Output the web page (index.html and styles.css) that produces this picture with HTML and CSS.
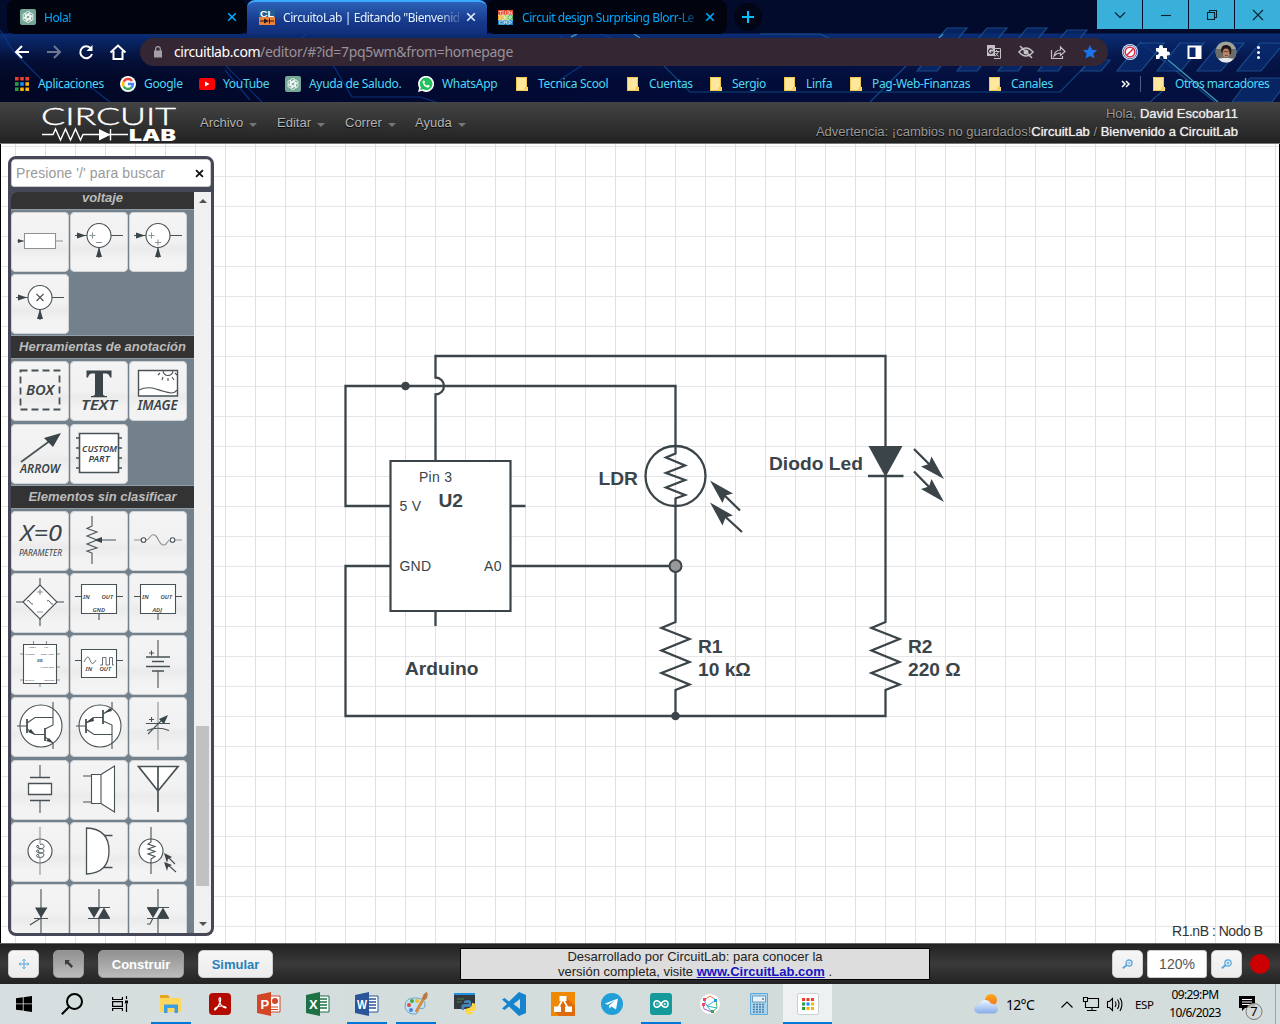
FILE: index.html
```html
<!DOCTYPE html>
<html lang="es">
<head>
<meta charset="utf-8">
<title>CircuitoLab | Editando "Bienvenido a CircuitLab"</title>
<link rel="stylesheet" href="styles.css">
</head>
<body>
<svg class="defs" width="0" height="0">
  <defs>
    <symbol id="gpt" viewBox="0 0 16 16"><rect width="16" height="16" rx="2" fill="#74a796"/><g fill="none" stroke="#fff" stroke-width=".8"><path id="petal" d="M5.6 9.3V4.8A2.4 2.4 0 0 1 10 3.6L6.5 5.8V8.5"/><use href="#petal" transform="rotate(60 8 8)"/><use href="#petal" transform="rotate(120 8 8)"/><use href="#petal" transform="rotate(180 8 8)"/><use href="#petal" transform="rotate(240 8 8)"/><use href="#petal" transform="rotate(300 8 8)"/></g></symbol>
    <symbol id="folder" viewBox="0 0 12 14"><path d="M0 0H11V10H12V14H0Z" fill="#ffe38c"/><path d="M.5 .5H10.5V9L9 11V13.5H.5Z" fill="#ffe79d" stroke="#f1c84e"/><path d="M9 13.5V11L10.5 9.5L11.5 11V13.5Z" fill="#f7cf57"/></symbol>
    <symbol id="close" viewBox="0 0 10 10"><path d="M1.2 1.2L8.8 8.8M8.8 1.2L1.2 8.8" fill="none" stroke="currentColor" stroke-width="1.6"/></symbol>
    <symbol id="grid9" viewBox="0 0 14 14"><path d="M0 0h3.6v3.6H0zM5.2 0h3.6v3.6H5.2zM10.4 0H14v3.6h-3.6z" fill="#e8402f"/><path d="M0 5.2h3.6v3.6H0z" fill="#2a9b4a"/><path d="M5.2 5.2h3.6v3.6H5.2z" fill="#1a8cff"/><path d="M10.4 5.2H14v3.6h-3.6zM5.2 10.4h3.6V14H5.2zM10.4 10.4H14V14h-3.6z" fill="#fbb40b"/><path d="M0 10.4h3.6V14H0z" fill="#2a9b4a"/></symbol>
    <linearGradient id="cloud" x2="0" y2="1"><stop stop-color="#edf4ff"/><stop offset="1" stop-color="#84ace8"/></linearGradient>
    <linearGradient id="sun" x2="0" y2="1"><stop stop-color="#ffab1b"/><stop offset="1" stop-color="#f0701a"/></linearGradient>
  </defs>
</svg>

<header class="browser">
  <svg class="theme" width="1280" height="102" viewBox="0 0 1280 102">
    <g fill="none" stroke="#0b3f94" stroke-width="1.2" opacity=".75">
      <path d="M0 30L14 52L50 88H92L110 102M200 40L262 102M225 70L250 100M330 60L352 97H420L436 102M372 0L410 32H430M480 0L500 22M560 36L590 60L560 80M600 34L640 48M290 50L330 10"/>
      <path d="M664 66L690 92H1060L1095 56" stroke="#0d5591"/>
      <path d="M870 102L928 44H1010M760 34L820 34L850 48M1040 102H1150L1166 88M1140 42L1215 102" stroke="#1a5a9e"/>
    </g>
    <g fill="#082b70" stroke="#225a9c" stroke-width="1.2" opacity=".75">
      <path d="M947 28h20l-10 12h-20zM987 28h20l-10 12h-20zM1027 28h20l-10 12h-20zM1067 30h20l-10 12h-20zM926 60h20l-9 11h-20zM966 60h20l-9 11h-20zM1007 60h20l-9 11h-20zM1047 60h20l-9 11h-20zM1090 60h20l-9 11h-20z"/>
      <path d="M1140 43h24l-23 28h-24zM1180 43h24l-23 28h-24zM1220 43h24l-23 28h-24zM1260 43h24l-23 28h-24zM1250 78h40l-18 24h-40z"/>
    </g>
    <path d="M937 40L943 34M571 37L577 34M640 38L634 34M1168 60L1218 102" stroke="#3b8fae" stroke-width="1.5"/>
  </svg>

  <div class="tabs">
    <div class="tab tab-first">
      <svg width="16" height="16"><use href="#gpt"/></svg>
      <span class="tab-title">Hola!</span>
      <svg class="x" width="10" height="10"><use href="#close"/></svg>
    </div>
    <div class="tab active">
      <svg width="16" height="16" viewBox="0 0 16 16"><rect width="16" height="8" fill="#1f5f96"/><rect y="8" width="16" height="8" fill="#ec8137"/><text x="1" y="7.5" class="cl" textLength="14" lengthAdjust="spacingAndGlyphs">CL</text><path d="M1 12H5M10 12H15M10.5 9.5V14.5" stroke="#241b18"/><path d="M5 9.5V14.5L10 12Z" fill="#241b18"/></svg>
      <span class="tab-title">CircuitoLab | Editando "Bienvenid</span>
      <svg class="x" width="10" height="10"><use href="#close"/></svg>
    </div>
    <div class="tab tab-third">
      <svg width="15" height="15" viewBox="0 0 15 15"><path fill="#e44b33" d="M0 0h15v5H0z"/><path fill="#f4a51f" d="M0 5h5v5H0z"/><path fill="#a4c739" d="M5 5h5v5H5z"/><path fill="#3fae4b" d="M10 5h5v5h-5z"/><path fill="#1f7fbf" d="M0 10h15v5H0z"/><path stroke="#fff" fill="none" stroke-width=".6" d="M1.2 1.5h2.6M2.5 1.5v2.5M7.5 1.2v2.8M11.4 4v-2.5l2.2 2.5v-2.5M1.5 6.2v2.8M3.8 6.2L2 7.5L3.8 9M8.8 6.2H6.5v2.6H8.8M6.5 7.5H8.5M11.5 9V6.3h2v1.3h-2L13.6 9M3.8 11.3H1.5v2.5h2.3M6.5 14v-2.7h2v2.7M6.5 12.7h2M11.5 11.3v2.5l2-.8v-1zM5 0v15M10 0v15M0 5h15M0 10h15"/></svg>
      <span class="tab-title">Circuit design Surprising Blorr-Le</span>
      <svg class="x" width="10" height="10"><use href="#close"/></svg>
    </div>
    <div class="newtab"><svg width="14" height="14" viewBox="0 0 14 14"><path d="M7 1V13M1 7H13" stroke="#00c3ff" stroke-width="2"/></svg></div>
    <div class="winctl">
      <span><svg width="12" height="12" viewBox="0 0 12 12"><path d="M1 3.5L6 8.5L11 3.5"/></svg></span>
      <span><svg width="12" height="12" viewBox="0 0 12 12"><path d="M1 6.5H11"/></svg></span>
      <span><svg width="12" height="12" viewBox="0 0 12 12"><path d="M1.5 3.5H8.5V10.5H1.5ZM3.5 3V1.5H10.5V8.5H9"/></svg></span>
      <span><svg width="12" height="12" viewBox="0 0 12 12"><path d="M1 1L11 11M11 1L1 11"/></svg></span>
    </div>
  </div>

  <div class="toolbar">
    <svg width="140" height="36" viewBox="0 34 140 36" fill="none" stroke="#fff" stroke-width="2">
      <path d="M29 52H17M22 46L16 52L22 58"/><path d="M47 52H59M54 46L60 52L54 58" stroke="#6f7890"/>
      <path d="M91 48.5A6 6 0 1 0 92 54"/><path d="M92.5 45V51H86.5Z" fill="#fff" stroke="none"/>
      <path d="M110.5 52.5L118 45.5L125.5 52.5M113.5 51V59H122.5V51"/>
    </svg>
    <div class="omnibox">
      <svg class="lock" width="8" height="12" viewBox="0 0 8 12"><path d="M0 4.5H8V11.5H0Z" fill="#a5a0a8"/><path d="M1.7 5V3A2.3 2.3 0 0 1 6.3 3V5" fill="none" stroke="#a5a0a8" stroke-width="1.2"/></svg>
      <span class="url"><b>circuitlab.com</b>/editor/#?id=7pq5wm&amp;from=homepage</span>
      <svg class="omni-icons" width="122" height="28" viewBox="980 38 122 28">
        <path d="M987 45H995V56H987Z" fill="#c4c0c6"/><path d="M993 48.5H1000.5V58.5H994" fill="none" stroke="#c4c0c6"/><path d="M992.5 49.5A2.3 2.3 0 1 0 993 52H991" fill="none" stroke="#342632" stroke-width="1.1"/><path d="M994 51.5H999.5M996.5 50V51.5M998.5 52L995 56.5M995.5 53L998.5 56.5" stroke="#c4c0c6"/>
        <path d="M1019 52Q1026 44 1033 52Q1026 60 1019 52Z" fill="none" stroke="#c4c0c6" stroke-width="1.6"/><circle cx="1026" cy="52" r="2.5" fill="#c4c0c6"/><path d="M1020 46L1032 58" stroke="#c4c0c6" stroke-width="1.6"/>
        <path d="M1051.5 50V58.5H1062.5V56M1054 56Q1055 50 1060.5 50V47L1065 51.5L1060.5 55.5V53Q1056.5 53 1054 56Z" fill="none" stroke="#c4c0c6" stroke-width="1.2"/>
        <path d="M1090 45L1092.1 49.7L1097.2 50.2L1093.4 53.5L1094.5 58.6L1090 55.9L1085.5 58.6L1086.6 53.5L1082.8 50.2L1087.9 49.7Z" fill="#1a73e8"/>
      </svg>
    </div>
    <svg width="172" height="36" viewBox="1108 34 172 36">
      <circle cx="1130" cy="52" r="8" fill="#f1f1f7"/><circle cx="1130" cy="52" r="6.8" fill="none" stroke="#4f69b5"/><circle cx="1130" cy="52" r="4.8" fill="#fff" stroke="#e02e42" stroke-width="1.6"/><path d="M1126.5 55.5L1133.5 48.5" stroke="#e02e42" stroke-width="1.6"/>
      <path d="M1156 48H1159V47A2 2 0 0 1 1163 47V48H1167V51.5H1168A2 2 0 0 1 1168 55.5H1167V59H1163.5V58A2 2 0 0 0 1159.5 58V59H1156V55H1157A1.7 1.7 0 0 0 1157 51.5H1156Z" fill="#fff"/>
      <path d="M1188.5 46.5H1200.5V58H1188.5Z" fill="#0a276a" stroke="#fff" stroke-width="2"/><path d="M1195.5 46H1201V58H1195.5Z" fill="#fff"/>
      <clipPath id="ava"><circle cx="1226" cy="52" r="10.5"/></clipPath>
      <g clip-path="url(#ava)"><path d="M1215 41H1237V63H1215Z" fill="#a3a299"/><path d="M1215 49H1237V58H1215Z" fill="#696c6b"/><path d="M1221 51Q1221 44 1227 45Q1233 46 1231 54L1223 55Z" fill="#1f1713"/><ellipse cx="1226" cy="53" rx="3.5" ry="4.5" fill="#b78468"/><path d="M1223.5 51.5H1228.5M1225 55.5H1227.5" stroke="#6d4534"/><path d="M1216 64Q1219 57 1225 58Q1233 57 1236 64Z" fill="#e5e9ec"/></g>
      <g fill="#fff"><circle cx="1258.5" cy="47.5" r="1.5"/><circle cx="1258.5" cy="52.5" r="1.5"/><circle cx="1258.5" cy="57.5" r="1.5"/></g>
    </svg>
  </div>

  <nav class="bookmarks">
    <a class="bm" style="width:105px"><svg width="14" height="14"><use href="#grid9"/></svg><span class="ap">Aplicaciones</span></a>
    <a class="bm" style="width:79px"><svg width="16" height="16" viewBox="0 0 16 16"><circle cx="8" cy="8" r="8" fill="#fff"/><g fill="none" stroke-width="2.4"><path d="M12 4.9A5 5 0 0 0 3.6 5.7" stroke="#ea4335"/><path d="M3.6 5.7A5 5 0 0 0 3.7 10.5" stroke="#fbbc05"/><path d="M3.7 10.5A5 5 0 0 0 11.3 11.7" stroke="#34a853"/><path d="M11.3 11.7A5 5 0 0 0 13 8H8" stroke="#4285f4"/></g></svg><span>Google</span></a>
    <a class="bm" style="width:86px"><svg width="16" height="12" viewBox="0 0 16 12"><rect width="16" height="12" rx="2.5" fill="#f00"/><path d="M6 3.5V8.5L10.5 6Z" fill="#fff"/></svg><span>YouTube</span></a>
    <a class="bm" style="width:133px"><svg width="16" height="16"><use href="#gpt"/></svg><span>Ayuda de Saludo.</span></a>
    <a class="bm" style="width:98px"><svg width="16" height="16" viewBox="0 0 16 16"><path d="M0 16L1.2 12A8 8 0 1 1 4 14.8Z" fill="#fff"/><path d="M2 14L3 11.5A6.3 6.3 0 1 1 5 13.3Z" fill="#22c05b"/><path d="M5.5 4.5Q6.5 4 7 6L6.3 7.2Q7.2 9 9 9.7L10 8.8Q12 9.3 11.7 10.3Q11 12 9 11.4Q5.5 10 4.6 7Q4.3 5.5 5.5 4.5Z" fill="#fff"/></svg><span>WhatsApp</span></a>
    <a class="bm f" style="width:111px"><svg width="12" height="14"><use href="#folder"/></svg><span>Tecnica Scool</span></a>
    <a class="bm f" style="width:83px"><svg width="12" height="14"><use href="#folder"/></svg><span>Cuentas</span></a>
    <a class="bm f" style="width:74px"><svg width="12" height="14"><use href="#folder"/></svg><span>Sergio</span></a>
    <a class="bm f" style="width:66px"><svg width="12" height="14"><use href="#folder"/></svg><span>Linfa</span></a>
    <a class="bm f" style="width:139px"><svg width="12" height="14"><use href="#folder"/></svg><span>Pag-Web-Finanzas</span></a>
    <a class="bm f" style="width:132px"><svg width="12" height="14"><use href="#folder"/></svg><span>Canales</span></a>
    <svg class="chev" width="9" height="8" viewBox="0 0 9 8"><path d="M1 1L4 4L1 7M5 1L8 4L5 7" fill="none" stroke="#fff" stroke-width="1.5"/></svg>
    <i class="bmsep"></i>
    <a class="bm f other"><svg width="12" height="14"><use href="#folder"/></svg><span>Otros marcadores</span></a>
  </nav>
</header>

<header class="apphead">
  <svg class="logo" width="136" height="41" viewBox="41 102 136 41">
    <text x="41" y="125" class="logo1" textLength="135" lengthAdjust="spacingAndGlyphs">CIRCUIT</text>
    <path d="M42 134.5H53L55.5 129L60.5 140L65.5 129L70.5 140L75.5 129L80.5 140L83 134.5H128M110.5 129V140.5" fill="none" stroke="#fff" stroke-width="1.4"/>
    <path d="M99 129V140.5L110.5 134.7Z" fill="#fff"/>
    <text x="129" y="140.5" class="logo2" textLength="47" lengthAdjust="spacingAndGlyphs">LAB</text>
  </svg>
  <nav class="menu">
    <span style="width:77px">Archivo<i></i></span><span style="width:68px">Editar<i></i></span><span style="width:70px">Correr<i></i></span><span>Ayuda<i></i></span>
  </nav>
  <div class="who"><div>Hola, <b>David Escobar11</b></div><div>Advertencia: ¡cambios no guardados!<b>CircuitLab</b> / <b>Bienvenido a CircuitLab</b></div></div>
</header>

<main class="canvas">
  <svg class="schematic" width="1278" height="799" viewBox="1 144 1278 799">
    <g class="wire">
      <path d="M435.5 461V394.5A8.5 8.5 0 0 0 435.5 377.5V356H885.5V447"/>
      <path d="M390 506H345.5V386H675.5V453.5L666 457.5L685 465.5L666 473L685 480L666 487.5L685 495L675.5 498.5V622L661.5 628L689.5 639L661.5 650.5L689.5 662L661.5 673L689.5 684.5L675.5 690V716"/>
      <path d="M390 566H345.5V716H885.5V690L899.5 684.5L871.5 673L899.5 662L871.5 650.5L899.5 639L871.5 628L885.5 622V476"/>
      <path d="M511 566H675M511 506H525.5M435.5 611V626M868 476H903.5"/>
      <circle cx="675.5" cy="476" r="30"/>
      <path d="M740 510.5L719 490M742 532L719 511M914 449L936 471M914 471.5L936 494"/>
    </g>
    <path d="M390.5 461H510.5V611H390.5Z" fill="#fff" stroke="#3b4449" stroke-width="2.2"/>
    <g fill="#3b4449"><path d="M868.5 446H902.5L885.5 477Z"/><circle cx="405.5" cy="386" r="4.3"/><circle cx="675.5" cy="716" r="4.3"/>
      <path d="M710 480.5L733 493.5L725.5 495.5L722.5 503ZM710 502.5L733 515.5L725.5 517.5L722.5 525.5ZM944 479L921 466.5L929 464L931.5 456.5ZM944 502L921 489L929 486.5L931.5 479Z"/></g>
    <circle cx="675.5" cy="566" r="6" fill="#999" stroke="#3b4449" stroke-width="2"/>
    <g class="lbl"><text x="438.5" y="507">U2</text><text x="405" y="675">Arduino</text><text x="598.5" y="485">LDR</text><text x="769" y="470" textLength="94">Diodo Led</text><text x="698" y="653">R1</text><text x="698" y="676">10 kΩ</text><text x="908" y="653">R2</text><text x="908" y="676">220 Ω</text></g>
    <g class="pin"><text x="419" y="482" textLength="33">Pin 3</text><text x="399.5" y="511" textLength="21.5">5 V</text><text x="399.5" y="571" textLength="31.5">GND</text><text x="484" y="571" textLength="17.5">A0</text></g>
    <text x="1172" y="936" class="status" textLength="91">R1.nB : Nodo B</text>
  </svg>

  <aside class="palette">
    <div class="search"><span>Presione '/' para buscar</span><svg width="9" height="9" viewBox="0 0 10 10"><path d="M1.2 1.2L8.8 8.8M8.8 1.2L1.2 8.8" stroke="#111" stroke-width="2"/></svg></div>
    <div class="pbody">
      <div class="plist">
        <h3 class="cut">voltaje</h3>
        <div class="tiles">
          <svg viewBox="0 0 58 60"><path class="l" d="M6 29H14M44 29H52"/><path class="l" d="M13.5 21.5H44.5V36.5H13.5Z"/><path class="a" d="M7 27L13 29L7 31Z"/></svg>
          <svg viewBox="0 0 58 60"><path d="M5 23.5H17M41 23.5H53M29 35V46"/><circle cx="29" cy="23.5" r="12"/><path class="l" d="M19.5 23.5H25.5M22.5 20.5V26.5M26 30.5H32"/><path class="a" d="M7 20.5L16 23.5L7 26.5ZM26 45L29 35L32 45Z"/></svg>
          <svg viewBox="0 0 58 60"><path d="M5 23.5H17M41 23.5H53M29 35V46"/><circle cx="29" cy="23.5" r="12"/><path class="l" d="M19.5 23.5H25.5M22.5 20.5V26.5M26 30.5H32M29 27.5V33.5"/><path class="a" d="M7 20.5L16 23.5L7 26.5ZM26 45L29 35L32 45Z"/></svg>
          <svg viewBox="0 0 58 60"><path d="M5 23.5H17M41 23.5H53M29 35V46"/><circle cx="29" cy="23.5" r="12"/><path d="M25.5 20L32.5 27M32.5 20L25.5 27"/><path class="a" d="M7 20.5L16 23.5L7 26.5ZM26 45L29 35L32 45Z"/></svg>
        </div>
        <h3>Herramientas de anotación</h3>
        <div class="tiles">
          <svg viewBox="0 0 58 60"><path d="M9.5 9.5H48.5V48.5H9.5Z" fill="none" stroke-width="1.8" stroke-dasharray="7 4"/><text x="15" y="34" font-size="14" font-weight="600" textLength="28" lengthAdjust="spacingAndGlyphs">BOX</text></svg>
          <svg viewBox="0 0 58 60"><path class="a" d="M16.5 9.5H41.5V16.5H40Q39 12.5 36 12.5H33V33Q33 35 37 35V36.2H21V35Q25 35 25 33V12.5H22Q19 12.5 18 16.5H16.5Z"/><text x="11" y="48.5" font-size="14" font-weight="600" textLength="36" lengthAdjust="spacingAndGlyphs">TEXT</text></svg>
          <svg viewBox="0 0 58 60"><path d="M9.5 9.5H48.5V35H9.5Z" stroke-width="1.4"/><path d="M10 29Q18 25 27 28T42 32Q46 32 48 29M34 9.5A5 5 0 0 0 44 9.5M31 12L29 14M34 16L33 19M39 17V20M43 16L45 19M46 12L48 14" fill="none"/><text x="8.5" y="48.5" font-size="14" font-weight="600" textLength="40" lengthAdjust="spacingAndGlyphs">IMAGE</text></svg>
          <svg viewBox="0 0 58 60"><path d="M10 38L40 16" stroke-width="1.6"/><path class="a" d="M50 9L42 23L33 14Z"/><text x="9" y="49" font-size="12.5" font-weight="600" textLength="40" lengthAdjust="spacingAndGlyphs">ARROW</text></svg>
          <svg viewBox="0 0 58 60"><path d="M6 14H10M6 24H10M6 34H10M6 44H10M48 14H52M48 24H52M48 34H52M48 44H52" stroke-width="1.6"/><path d="M9.5 9.5H48.5V48.5H9.5Z" stroke-width="1.6"/><text x="12" y="27.5" font-size="9" font-weight="600" textLength="35" lengthAdjust="spacingAndGlyphs">CUSTOM</text><text x="18.5" y="37.5" font-size="9" font-weight="600" textLength="21" lengthAdjust="spacingAndGlyphs">PART</text></svg>
        </div>
        <h3>Elementos sin clasificar</h3>
        <div class="tiles">
          <svg viewBox="0 0 58 60"><text x="9" y="30" font-size="22" textLength="42" lengthAdjust="spacingAndGlyphs">X=0</text><text x="8" y="45" font-size="8" textLength="43" lengthAdjust="spacingAndGlyphs">PARAMETER</text></svg>
          <svg viewBox="0 0 58 60"><path d="M22 5V15L17 17.5L27 21L17 25L27 29L17 33L27 37L17 40L22 42V53M26 29H46" fill="none"/><path class="a" d="M24 29L32 26V32Z"/></svg>
          <svg viewBox="0 0 58 60"><path class="l" d="M5 29H12M46 29H53M17 29Q19 29 21 26Q24 22 27 25Q28 26 30 30Q33 36 37 33L40 29" fill="none"/><circle cx="14.5" cy="29" r="2.3"/><circle cx="43.5" cy="29" r="2.3"/></svg>
          <svg viewBox="0 0 58 60"><path d="M5 29H12M46 29H53M29 5V12M29 46V53"/><path d="M12 29L29 12L46 29L29 46Z"/><path class="l" d="M26 19H32M29 16V22M26 39H32"/><path d="M16 28Q18 26.5 19 29T22 31M36 28Q38 26.5 39 29T42 31" fill="none" stroke-width=".9"/></svg>
          <svg viewBox="0 0 58 60"><path d="M5 23.5H11M47 23.5H53M29 41V47"/><path d="M11.5 11.5H46.5V40.5H11.5Z"/><text x="13" y="25.5" font-size="6" class="tx">IN</text><text x="31.5" y="25.5" font-size="6" class="tx">OUT</text><text x="22.5" y="38.5" font-size="6" class="tx">GND</text></svg>
          <svg viewBox="0 0 58 60"><path d="M5 23.5H11M47 23.5H53M29 41V47"/><path d="M11.5 11.5H46.5V40.5H11.5Z"/><text x="13" y="25.5" font-size="6" class="tx">IN</text><text x="31.5" y="25.5" font-size="6" class="tx">OUT</text><text x="23.5" y="38.5" font-size="6" class="tx">ADJ</text></svg>
          <svg viewBox="0 0 58 60"><path class="l" d="M9 19H12M9 45H12M46 19H49M46 32H49M46 45H49M22.5 6V9M35.5 6V9M29 49V52"/><path d="M12.5 9.5H45.5V48.5H12.5Z"/><g class="tiny"><text x="18" y="12.5">RESET</text><text x="33" y="12.5">VCC</text><text x="14" y="20">TRIGGER</text><text x="30" y="20">DISCHARGE</text><text x="26" y="27" font-weight="bold" font-size="3.5">555</text><text x="29.5" y="33">THRESHOLD</text><text x="14" y="46">OUTPUT</text><text x="33" y="46">CONTROL</text></g></svg>
          <svg viewBox="0 0 58 60"><path d="M5 25.5H11M47 25.5H53"/><path d="M11.5 14.5H46.5V42.5H11.5Z"/><path d="M14 27Q18 18 20 25T26 25M30 30H32.5V22.5H36V30H39.5V22.5H42.5V30H44" fill="none" stroke-width=".8"/><text x="15.5" y="36" font-size="6" class="tx">IN</text><text x="29.5" y="36" font-size="6" class="tx">OUT</text></svg>
          <svg viewBox="0 0 58 60"><path d="M29 5V22M29 36V53M20 18H25M22.5 15.5V20.5"/><path d="M17 22H41M23 26.5H35M17 31.5H41M23 36H35" stroke-width="1.3"/></svg>
          <svg viewBox="0 0 58 60"><circle cx="30" cy="29" r="21"/><path d="M6 29H16M42 5V28L34 32M16 26L24 20.5H42M16 32L24 37.5H34M34 40L42 46V52" fill="none"/><path d="M16 22V36M34 31V44" stroke-width="1.8"/><path class="a" d="M24 38L17 35L20 32ZM42 46L35 44L38 41Z"/></svg>
          <svg viewBox="0 0 58 60"><circle cx="30" cy="29" r="21"/><path d="M6 29H16M42 5V12L33 17M33 24L42 28V52M16 26L24 20.5H33M16 32L24 37.5H42" fill="none"/><path d="M16 22V36M33 13V27" stroke-width="1.8"/><path class="a" d="M16 26L23 20L24 24ZM34 16L40 11L42 14Z"/></svg>
          <svg viewBox="0 0 58 60"><path d="M29 5V53" class="l"/><path d="M17 26.5H41M18 33.5Q29 29 40 33.5M20 22.5H25M22.5 20V25M19 37L34 22" fill="none"/><path class="a" d="M39 18L35 27L30 22Z"/></svg>
          <svg viewBox="0 0 58 60"><path d="M29 5V17M29 40V53"/><path d="M19 17.5H39M19 40.5H39" stroke-width="1.5"/><path d="M17.5 23.5H40.5V34.5H17.5Z" stroke-width="1.3"/></svg>
          <svg viewBox="0 0 58 60"><path d="M13 16H22M13 42H22"/><path d="M21.5 14.5H31V43.5H21.5ZM31 14.5L44.5 6V52L31 43.5"/></svg>
          <svg viewBox="0 0 58 60"><path d="M9.5 6.5H49L29 31ZM29 6V52" stroke-width="1.7"/></svg>
          <svg viewBox="0 0 58 60"><circle cx="29" cy="29" r="12"/><path class="l" d="M29 5V22M29 36V53"/><path d="M29 22.5Q33 21 33 24.5Q33 27 28 26.5Q24 25 26 23.5Q28 22 28 26.5M28 27Q33 26 33 29Q33 31.5 28 31Q24 30 26 28Q28 27 28 31M28 31Q33 30 33 33Q33 35.5 29 35.5Q24 35 26 32.5Q28 31 28 35" fill="none" stroke-width=".9"/></svg>
          <svg viewBox="0 0 58 60"><path d="M33 13.5H42.5M33 45.5H42.5" stroke-width="1.3"/><path d="M16.5 6Q39 7 39 29T16.5 52Z" stroke-width="1.3"/></svg>
          <svg viewBox="0 0 58 60"><circle cx="22" cy="29" r="12"/><path d="M22 5V20L19 22L26 24.5L19 27L26 29.5L19 32L26 34.5L22 37V52M46 42L38 34M47 50L38 42" fill="none"/><path class="a" d="M35 31L43 35L39 37L38 41ZM35 40L43 43L39 45L38 49Z"/></svg>
          <svg viewBox="0 0 58 60"><path d="M30 5V60M23 34.5H37M30 34L22 39L19 41" fill="none"/><path class="a" d="M24 23.5H36.5L30 34Z"/></svg>
          <svg viewBox="0 0 58 60"><path d="M29 5V24M29 35V60M18 34.5H40M18 23.5H40"/><path class="a" d="M18 24H30L24 34ZM34 23.5L40 34H28Z"/></svg>
          <svg viewBox="0 0 58 60"><path d="M29 5V24M29 35V60M18 34.5H40M18 23.5H40M24 34L21 40H18" fill="none"/><path class="a" d="M18 24H30L24 34ZM34 23.5L40 34H28Z"/></svg>
        </div>
      </div>
      <div class="scroll"><i class="up"></i><i class="thumb"></i><i class="down"></i></div>
    </div>
  </aside>
</main>

<footer class="appfoot">
  <span class="btn" style="width:31px"><svg width="10" height="10" viewBox="0 0 10 10"><path d="M5 0V10M0 5H10M3.5 1.8L5 .3L6.5 1.8M3.5 8.2L5 9.7L6.5 8.2M1.8 3.5L.3 5L1.8 6.5M8.2 3.5L9.7 5L8.2 6.5" fill="none" stroke="#5aa7dd"/></svg></span>
  <span class="btn on" style="width:31px"><svg width="8" height="8" viewBox="0 0 8 8"><path d="M0 0H5L3.5 1.5L8 6L6.5 8L2 3.5L0 5Z" fill="#3c3c3c"/></svg></span>
  <span class="btn on" style="width:86px">Construir</span>
  <span class="btn" style="width:75px">Simular</span>
  <div class="banner">Desarrollado por CircuitLab: para conocer la<br>versión completa, visite <a>www.CircuitLab.com</a> .</div>
  <div class="zoomer">
    <span class="btn"><svg width="11" height="10" viewBox="0 0 11 10"><circle cx="7" cy="4" r="3" fill="none" stroke="#5aa7dd" stroke-width="1.3"/><path d="M4.8 6L.8 9.2" stroke="#5aa7dd" stroke-width="1.9"/><path d="M5.5 4H8.5" stroke="#5aa7dd"/></svg></span>
    <span class="pct">120%</span>
    <span class="btn"><svg width="11" height="10" viewBox="0 0 11 10"><circle cx="7" cy="4" r="3.2" fill="none" stroke="#5aa7dd" stroke-width="1.2"/><path d="M4.8 6L.8 9.2" stroke="#5aa7dd" stroke-width="1.9"/><path d="M5.5 4H8.5M7 2.5V5.5" stroke="#5aa7dd"/></svg></span>
    <i class="red"></i>
  </div>
</footer>

<footer class="taskbar">
  <div class="tk s"><svg width="16" height="16" viewBox="0 0 16 16"><path d="M0 2.3L6.8 1.3V7.5H0ZM7.6 1.2L16 0V7.5H7.6ZM0 8.3H6.8V14.6L0 13.7ZM7.6 8.3H16V16L7.6 14.8Z"/></svg></div>
  <div class="tk s"><svg width="22" height="22" viewBox="0 0 22 22" fill="none" stroke="#000" stroke-width="2"><circle cx="13.5" cy="8.5" r="7.5"/><path d="M8 14L.8 21.2"/></svg></div>
  <div class="tk s"><svg width="16" height="16" viewBox="0 0 16 16" fill="none" stroke="#000" stroke-width="1.2"><path d="M.6 1V3.5H10.4V1M.6 15V12.5H10.4V15M.6 5.6H10.4V10.4H.6ZM14.5 0V3M14.5 8V16"/><path d="M13 4.5H16V7.5H13Z" fill="#000" stroke="none"/></svg></div>
  <div class="tk run exp"><svg width="22" height="20" viewBox="0 0 22 20"><path d="M0 1H8L10 4H0Z" fill="#e5a51d"/><path d="M0 4H21V18H0Z" fill="#ffd75e"/><path d="M4 19V10.5H18V19H14.5V14H7.5V19Z" fill="#3b9ee0"/></svg></div>
  <div class="tk"><svg width="22" height="22" viewBox="0 0 22 22"><rect width="22" height="22" rx="4" fill="#b30b00"/><path d="M10.5 5Q12 4 11.5 8Q9.5 14 6 17Q4.5 16 8 14Q13 12 16.5 14Q18 15.5 15 14.5Q11 12 10 7Q9.8 5.5 10.5 5Z" fill="none" stroke="#fff" stroke-width="1.2"/></svg></div>
  <div class="tk"><svg width="24" height="24" viewBox="0 0 24 24"><path d="M12 4H23V20H12Z" fill="#fff" stroke="#d24726"/><circle cx="18" cy="9" r="3" fill="#d24726"/><path d="M14 15H21M14 17.5H21" stroke="#d24726"/><path d="M0 3L14 0V24L0 21Z" fill="#d24726"/><text x="3.5" y="16.5" class="off">P</text></svg></div>
  <div class="tk"><svg width="24" height="24" viewBox="0 0 24 24"><path d="M12 4H23V20H12Z" fill="#fff" stroke="#1e7145"/><path d="M14 7H21M14 10H21M14 13H21M14 16H21" stroke="#1e7145" stroke-width="1.5"/><path d="M0 3L14 0V24L0 21Z" fill="#1e7145"/><text x="3" y="16.5" class="off">X</text></svg></div>
  <div class="tk run"><svg width="24" height="24" viewBox="0 0 24 24"><path d="M12 4H23V20H12Z" fill="#fff" stroke="#2a5699"/><path d="M14 7H21M14 10H21M14 13H21M14 16H21" stroke="#2a5699" stroke-width="1.3"/><path d="M0 3L14 0V24L0 21Z" fill="#2a5699"/><text x="2" y="16.5" class="off" textLength="10" lengthAdjust="spacingAndGlyphs">W</text></svg></div>
  <div class="tk run"><svg width="24" height="24" viewBox="0 0 24 24"><path d="M1 14Q1 5 13 6Q22 7 21 14Q20 18 15 16Q12 17 14 20Q13 23 8 22Q1 20 1 14Z" fill="#c3e1f2" stroke="#6aa9ca"/><circle cx="8" cy="9" r="2" fill="#42a846"/><circle cx="5" cy="13" r="2" fill="#e54c35"/><circle cx="7" cy="18" r="2" fill="#4a7fe0"/><circle cx="13" cy="9" r="2" fill="#f4b92c"/><path d="M12 20L20 6" stroke="#d58d41" stroke-width="3"/><path d="M18 7Q19 1 23 0Q25 5 21 8Z" fill="#b87a42"/></svg></div>
  <div class="tk"><svg width="24" height="24" viewBox="0 0 24 24"><path d="M1 1H22V17H1Z" fill="#33393c"/><path d="M1 1H22V3H1Z" fill="#2291dc"/><path d="M4 7H11M4 10H9" stroke="#42874c"/><path d="M9 18Q7 12 11 12H16V11H11V9Q15 7 18 9V14Q18 15 16 15H12Q11 15 11 18Z" fill="#4584b6"/><path d="M12 20V18Q13 16 16 16Q19 15 19 11Q24 11 23 17Q22 19 21 19H17V20H20V21Q16 25 12 20Z" fill="#ffd545"/></svg></div>
  <div class="tk"><svg width="24" height="24" viewBox="0 0 24 24"><path d="M17 0L24 3V21L17 24L7 14.5L2.5 18L0 16.5L5 12L0 7.5L2.5 6L7 9.5ZM18 7L11.5 12L18 17Z" fill="#1583cd" fill-rule="evenodd"/></svg></div>
  <div class="tk"><svg width="24" height="24" viewBox="0 0 24 24"><path d="M0 0H24V24H0Z" fill="#f08705"/><path d="M14 4L24 14V24H8L4 20Z" fill="#df6c0c"/><path d="M12 7L6.5 17M12 7L17.5 17" stroke="#fff" stroke-width="1.6"/><path d="M8.5 4H15.5V9H8.5ZM3 14.5H10V20H3ZM14 14.5H21V20H14Z" fill="#fff"/></svg></div>
  <div class="tk"><svg width="22" height="22" viewBox="0 0 22 22"><circle cx="11" cy="11" r="11" fill="#229ed9"/><path d="M4 10.5L17 5.5L15 16.5L10.5 13.5L8.5 15.5L8 12.5L14 7.5L6.5 11.8Z" fill="#fff"/></svg></div>
  <div class="tk run"><svg width="22" height="22" viewBox="0 0 22 22"><rect width="22" height="22" rx="3" fill="#159a9c"/><path d="M11 11C8 6 4 7.5 4 11S8 16 11 11C14 6 18 7.5 18 11S14 16 11 11" fill="none" stroke="#fff" stroke-width="1.5"/><path d="M6 11H8.5M13.5 11H16M14.7 9.8V12.2" stroke="#fff" stroke-width=".8"/></svg></div>
  <div class="tk"><svg width="22" height="22" viewBox="0 0 22 22"><circle cx="11" cy="11" r="10.5" fill="#fff" stroke="#d7dbd9"/><g fill="none" stroke-width="1"><path d="M5 7L11 3L17 7" stroke="#eb6d49"/><path d="M17 7L18 15L13 19" stroke="#58bb67"/><path d="M13 19L5 16L4 11" stroke="#a862d0"/><path d="M5 7L8 13L17 7M8 13L13 19M8 13L18 15" stroke="#34b6c6"/></g><path d="M3 10H6V13H3ZM4 5H7V8H4Z" fill="#ef476f"/><path d="M15 6H18V9H15Z" fill="#2296e9"/><path d="M12 17H15V20H12Z" fill="#37a754"/></svg></div>
  <div class="tk"><svg width="18" height="22" viewBox="0 0 18 22"><path d="M.5 .5H17.5V21.5H.5Z" fill="#a7d5f1" stroke="#5faad6"/><path d="M2.5 3H15.5V9H2.5Z" fill="#e8f4fb" stroke="#6e9bb8"/><path d="M3 11.5H15M3 14H15M3 16.5H15M3 19H15" stroke="#517fa0" stroke-width="1.5" stroke-dasharray="2 1"/><path d="M12 6H14" stroke="#234"/></svg></div>
  <div class="tk act"><svg width="22" height="22" viewBox="0 0 22 22"><rect x=".5" y=".5" width="21" height="21" rx="1.5" fill="#fff" stroke="#cbd0d1"/><use href="#grid9" x="5" y="5" width="12" height="12"/></svg></div>
  <svg class="weather" width="25" height="20" viewBox="0 0 25 20"><circle cx="17" cy="6" r="6" fill="url(#sun)"/><path d="M5 19.5A4.5 4.5 0 0 1 4.5 10.5A7 7 0 0 1 17 9.5Q23 10 24 15Q23.5 19 20 19.5Z" fill="url(#cloud)"/></svg>
  <span class="temp">12°C</span>
  <svg class="tray" width="66" height="18" viewBox="1060 995 66 18" fill="none" stroke="#000" stroke-width="1.1"><path d="M1061.5 1007.5L1067 1002L1072.5 1007.5M1088 998.5H1098.5V1007.5H1085.5V1002M1083.5 997.5H1087.5V1001.5H1083.5ZM1092 1008V1011M1087 1010.5H1096.5M1107.5 1001.5H1109.5L1112.5 998.5V1010.5L1109.5 1007.5H1107.5ZM1115 1001.5Q1117 1004 1115 1007M1117.5 999.5Q1120.5 1004 1117.5 1009M1120 998Q1124 1004 1120 1011"/></svg>
  <span class="lang">ESP</span>
  <div class="clock"><div>09:29:PM</div><div>10/6/2023</div></div>
  <svg class="notif" width="26" height="27" viewBox="0 0 26 27"><path d="M1 1H17V13H7L4 16V13H1Z" fill="#000"/><path d="M4 4.5H14M4 7H14M4 9.5H14" stroke="#fff"/><circle cx="16" cy="16.5" r="8" fill="#d6dad9" fill-opacity=".85" stroke="#777"/><text x="16" y="21" text-anchor="middle">7</text></svg>
  <i class="desk"></i>
</footer>
</body>
</html>
```
FILE: styles.css
```css
* { box-sizing: border-box; }
body { margin: 0; width: 1280px; height: 1024px; overflow: hidden; background: #fff; font-family: "Liberation Sans", Arial, sans-serif; display: flex; flex-direction: column; }
svg { display: block; flex: none; }
.defs { position: absolute; }

/* Browser chrome */
.browser { position: relative; height: 102px; flex: none; background: linear-gradient(#020b2c 33px, #0b2c74 34px, rgba(8, 34, 95, .3) 60px, transparent 80px), linear-gradient(90deg, #020724, #020a33 40%, #030e3d 70%, #04103f); font-family: "Noto Sans", "Open Sans", sans-serif; font-size: 12px; }
.theme { position: absolute; left: 0; top: 0; }
.tabs, .toolbar, .bookmarks { position: relative; display: flex; align-items: center; }
.tabs { height: 34px; align-items: flex-start; }
.tab { width: 240px; height: 34px; display: flex; align-items: center; padding-left: 12px; color: #00aaff; background: #01030f; border-radius: 8px; }
.tab-first { padding-left: 13px; margin-left: 7px; }
.tab.active { color: #e4f2ff; background: linear-gradient(#2c62b8, #17398c 60%, #112f79); border-top: 2px solid #3ba8ff; border-radius: 8px 8px 0 0; padding-bottom: 2px; }
.tab-third { padding-left: 11px; }
.tab-title { width: 176px; margin-left: 8px; white-space: nowrap; overflow: hidden; letter-spacing: -.42px; -webkit-mask-image: linear-gradient(90deg, #000 88%, transparent 103%); }
.tab .x { margin-left: 7px; }
.tab-third .tab-title { margin-left: 9px; }
.cl { font: bold 8.5px "Liberation Sans", sans-serif; fill: #fff; }
.newtab { width: 28px; height: 28px; margin: 3px 0 0 7px; border-radius: 50%; background: #010515; display: flex; align-items: center; justify-content: center; }
.winctl { margin-left: auto; display: flex; gap: 1px; }
.winctl span { width: 45px; height: 29px; background: #38b0d9; display: flex; align-items: center; justify-content: center; }
.winctl path { fill: none; stroke: #06202c; stroke-width: 1.1; }
.toolbar { height: 36px; }
.omnibox { width: 968px; height: 28px; border-radius: 14px; background: #342632; display: flex; align-items: center; color: #98929b; }
.lock { margin-left: 14px; }
.url { margin-left: 12px; font-size: 14px; letter-spacing: -.33px; white-space: nowrap; padding-bottom: 2px; }
.url b { font-weight: 400; color: #fff; letter-spacing: -.42px; }
.omni-icons { margin-left: auto; margin-right: 6px; }
.bookmarks { height: 32px; padding: 0 0 4px 15px; color: #4fd8f5; }
.bm { display: flex; align-items: center; white-space: nowrap; letter-spacing: -.32px; flex: none; }
.bm span { margin-left: 8px; padding-bottom: 1px; }
.bm .ap { margin-left: 9px; }
.bm.f span { margin-left: 10px; }
.bm.other { letter-spacing: -.45px; }
.chev { margin-right: 10px; }
.bmsep { width: 1px; height: 16px; background: #4d5d83; margin-right: 12px; }

/* Editor header */
.apphead { height: 42px; flex: none; display: flex; align-items: center; padding: 0 42px 0 41px; background: linear-gradient(#444, #222); border-bottom: 1px solid #777; color: #999; font-size: 13px; }
.logo1 { font: 300 24px Lato, Inter, sans-serif; fill: #fff; stroke: #fff; stroke-width: .4; }
.logo2 { font: 900 15.5px Inter, sans-serif; fill: #fff; }
.menu { display: flex; margin-left: 23px; color: #b5b5b5; text-shadow: 0 1px 1px #000; }
.menu span { display: flex; align-items: center; }
.menu i { border: 4px solid transparent; border-top-color: #777; border-bottom: 0; margin: 5px 0 0 6px; }
.who { margin-left: auto; text-align: right; line-height: 18px; white-space: nowrap; text-shadow: 0 1px 1px #000; padding-top: 1px; }
.who b { font-weight: 400; color: #eee; text-shadow: 0 0 1px #ccc; }

/* Drawing canvas */
.canvas { position: relative; height: 799px; flex: none; border: solid #000; border-width: 0 1px; background: linear-gradient(90deg, #e1e1e1 1px, transparent 1px) 14px 0 / 30px 30px, linear-gradient(#e6e6e6 1px, transparent 1px) 0 2px / 30px 30px, #fff; }
.wire { fill: none; stroke: #3b4449; stroke-width: 2.3; }
.lbl { font: bold 19.2px "Liberation Sans", Arial, sans-serif; fill: #3b4449; }
.pin { font-size: 14px; fill: #3b4449; }
.status { font-size: 14px; fill: #333; }

/* Component palette */
.palette { position: absolute; left: 7px; top: 12px; width: 206px; height: 780px; border: 3px solid #464858; border-radius: 8px; background: #464858; display: flex; flex-direction: column; overflow: hidden; }
.search { height: 28px; flex: none; background: #fff; border: 1px solid #ccc; border-radius: 3px; display: flex; align-items: center; justify-content: space-between; padding: 0 6px 0 4px; font-size: 14px; letter-spacing: .12px; color: #999; margin-bottom: 5px; }
.pbody { flex: 1; min-height: 0; display: flex; }
.plist { width: 183px; overflow: hidden; background: #73818c; border-top-left-radius: 6px; }
.plist h3 { height: 24px; margin: 1px 0 2px; border: solid #929ca4; border-width: 1px 0; background: #333; color: #bbb; font: italic bold 13px/21px "Liberation Sans", Arial, sans-serif; text-align: center; white-space: nowrap; }
.plist h3.cut { height: 18px; margin: 0 0 2px; border-top: 0; line-height: 12px; }
.tiles { display: grid; grid-template-columns: repeat(3, 58px); grid-auto-rows: 60px; gap: 2.3px 1px; }
.tiles > svg { width: 58px; height: 60px; border-radius: 5px; box-shadow: inset 0 0 0 1px #d0d3d6; background: linear-gradient(#f4f4f4, #f1f1f1 50%, #ebebeb 60%, #f3f3f3 80%); fill: #fff; stroke: #485156; stroke-width: 1.1; }
.tiles .l { stroke: #8d9295; }
.tiles .a { fill: #3b4449; stroke: none; }
.tiles text { fill: #3b4449; stroke: none; font-family: "Noto Sans", sans-serif; font-style: italic; }
.tiles .tx { font-weight: 600; }
.tiles .tiny { font-size: 2.5px; }
.scroll { width: 17px; background: #f0f0f0; display: flex; flex-direction: column; align-items: center; }
.up { border: 4px solid transparent; border-bottom-color: #505050; border-top: 0; margin-top: 7px; }
.thumb { width: 13px; height: 160px; background: #c1c1c1; margin: 523px 2px 0; }
.down { border: 4px solid transparent; border-top-color: #505050; border-bottom: 0; margin-top: 36px; }

/* Editor footer */
.appfoot { height: 41px; flex: none; display: flex; align-items: center; padding: 0 10px 0 8px; background: linear-gradient(#222, #3a3a3a 50%, #222); border-top: 1px solid #666; }
.btn { width: 31px; height: 28px; flex: none; margin-right: 14px; border: 1px solid #ccc; border-radius: 5px; background: linear-gradient(#f6f6f6, #ececec); color: #2a80b9; font-weight: bold; font-size: 13px; display: flex; align-items: center; justify-content: center; }
.btn.on { background: linear-gradient(#919191, #bcbcbc); border-color: #999; color: #fff; }
.banner { width: 470px; height: 32px; margin-left: 173px; border: 1px solid #000; background: #ddd; color: #222; font-size: 13px; line-height: 15px; text-align: center; }
.banner a { color: #1515c4; font-weight: bold; text-decoration: underline; }
.zoomer { margin-left: auto; display: flex; align-items: center; gap: 4px; }
.zoomer .btn { margin: 0; }
.pct { width: 60px; height: 28px; background: #fff; border: 1px solid #ccc; border-radius: 3px; color: #555; font-size: 14px; display: flex; align-items: center; justify-content: center; }
.red { width: 20px; height: 20px; border-radius: 50%; background: #c00; margin-left: 4px; }

/* Windows taskbar */
.taskbar { height: 40px; flex: none; display: flex; align-items: center; background: linear-gradient(90deg, #d6dedf, #d2dcda 75%, #d4dddd); font-family: "Noto Sans", "Open Sans", sans-serif; font-size: 12px; color: #000; }
.tk { width: 49px; height: 40px; flex: none; display: flex; align-items: center; justify-content: center; }
.tk.s { width: 48px; }
.tk.exp { margin-left: 2px; }
.tk.run { background: linear-gradient(#0078d7, #0078d7) center bottom / 40px 2px no-repeat; }
.tk.act { width: 49px; background: linear-gradient(#0078d7, #0078d7) bottom / 100% 2px no-repeat, #edf1f2; }
.off { font: bold 13px "Liberation Sans", sans-serif; fill: #fff; }
.weather { margin-left: 142px; }
.temp { width: 54px; margin-left: 7px; font-size: 14px; letter-spacing: -.7px; }
.lang { width: 27px; margin-left: 9px; letter-spacing: -.4px; font-size: 11.5px; }
.clock { width: 66px; text-align: center; line-height: 18px; letter-spacing: -.6px; white-space: nowrap; }
.notif { margin: 9px 0 0 10px; }
.notif text { font-size: 13px; }
.desk { width: 1px; height: 40px; background: #9ca5a6; margin-left: auto; margin-right: 4px; }
```
